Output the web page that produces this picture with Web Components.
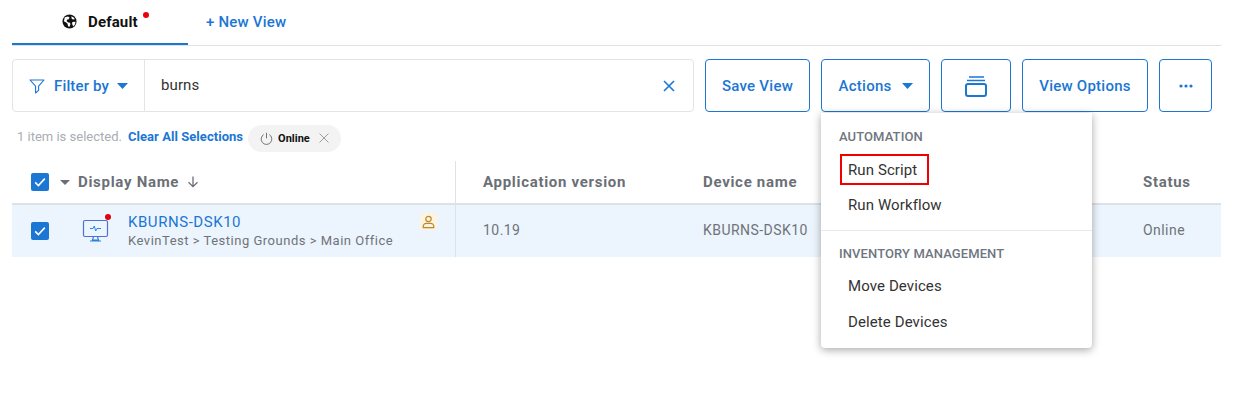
<!DOCTYPE html>
<html><head><meta charset="utf-8"><style>
html,body{margin:0;padding:0;background:#fff}
body{font-family:Roboto,"Liberation Sans",sans-serif;width:1233px;height:413px;overflow:hidden}
</style></head><body>
<app-page></app-page>
<script>
const CHECK=`<svg width="18" height="18" viewBox="0 0 18 18"><rect width="18" height="18" rx="2" fill="#1b76d4"/><path d="M4.2 9.4l3.2 3.2 6.4-7" fill="none" stroke="#fff" stroke-width="1.6"/></svg>`;
const CARET=`<svg width="11" height="6" viewBox="0 0 11 6"><path d="M0 0h11L5.5 6z" fill="#1b76d4"/></svg>`;
function def(name,css,html){customElements.define(name,class extends HTMLElement{constructor(){super();this.attachShadow({mode:'open'}).innerHTML=`<style>${css}</style>${html}`}})}

def('view-tabs',`:host{display:flex;height:45px;border-bottom:1px solid #dfe1e4;box-sizing:content-box;font-size:15px;font-weight:500;letter-spacing:.2px}
.tab{box-sizing:border-box;width:176px;height:45px;border-bottom:2px solid #1b76d4;display:flex;align-items:center;color:#111;padding:0 0 0 50px;position:relative}
.tab svg{margin-right:11px}
.tab span{font-weight:700;letter-spacing:.15px}
.dot{width:6px;height:6px;border-radius:50%;background:#e8000f;position:absolute;left:131px;top:12px}
.new{margin-left:18px;color:#1b76d4;display:flex;align-items:center;padding-bottom:1px}`,
`<div class="tab"><svg width="15" height="15" viewBox="0 0 16 16"><circle cx="8" cy="8" r="7.5" fill="#111"/><path d="M3 3.5l3.5-.8 1.6 1.4-1 1.6-1.8.3-.3 1.6 1.7 1.5 1.9.2.4 1.7-1 2.6-1.4-.4-.8-3-2.2-1.6-1.6-.8zM10 2.3l2.8 1.7.8 1.6-2 .3-1.4-1zM11 8.5l3.4-.3-.6 3-1.8 2-1.2-2.5z" fill="#fff"/></svg><span>Default</span><i class="dot"></i></div><div class="new">+ New View</div>`);

def('filter-box',`:host{display:flex;width:682px;height:53px;box-sizing:border-box;border:1px solid #e2e4e7;border-radius:4px;align-items:center;font-size:15px}
.f{width:132px;height:100%;box-sizing:border-box;border-right:1px solid #e2e4e7;display:flex;align-items:center;color:#1b76d4;font-weight:500;padding-left:17px;flex:none}
.f svg:first-child{margin-left:-1px}
.f span{margin:0 8px 0 9px;letter-spacing:.15px}
.q{flex:1;padding-left:16px;color:#333;font-size:15px;margin-top:-1px;letter-spacing:.1px}
.x{margin-right:17px;display:flex}`,
`<div class="f"><svg width="16" height="16" viewBox="0 0 16 16"><path d="M1 2h14L9.6 8.2v4.2L6.6 15V8.2z" fill="none" stroke="#1b76d4" stroke-width="1.1" stroke-linejoin="round"/></svg><span>Filter by</span>${CARET}</div><div class="q">burns</div><div class="x"><svg width="14" height="14" viewBox="0 0 14 14"><path d="M2 2l10 10M12 2L2 12" stroke="#1b76d4" stroke-width="1.6"/></svg></div>`);

def('tool-button',`:host{display:flex;align-items:center;justify-content:center;gap:11px;box-sizing:border-box;height:53px;border:1px solid #1b76d4;border-radius:4px;color:#1b76d4;font-size:15px;font-weight:500;letter-spacing:.25px;flex:none;background:#fff}`,`<slot></slot>`);

def('selection-line',`:host{display:flex;align-items:center;height:49px;padding:0 0 0 5px;font-size:13px}
.g{color:#a9adb3;margin-right:6px}
.c{color:#1b76d4;font-weight:700;margin-top:-1px;letter-spacing:.05px}
.chip{margin-left:5px;width:93px;height:27px;border-radius:14px;background:#f3f3f3;display:flex;align-items:center;box-sizing:border-box;padding-left:12px;font-size:11px;font-weight:700;color:#111;margin-top:3px}
.chip span{margin:0 9px 0 5px}`,
`<span class="g">1 item is selected.</span><span class="c">Clear All Selections</span><div class="chip"><svg width="13" height="13" viewBox="0 0 13 13"><path d="M3.7 2.6a5.3 5.3 0 1 0 5.6 0M6.5.8v5.6" fill="none" stroke="#6f7276" stroke-width="1"/></svg><span>Online</span><svg width="10" height="10" viewBox="0 0 10 10"><path d="M.5.5l9 9M9.5.5l-9 9" stroke="#9a9da1" stroke-width="1"/></svg></div>`);

def('device-table',`:host{display:block;width:1209px;font-size:14px}
.r{display:grid;grid-template-columns:443px 1px 220px 440px 105px;align-items:center}
.h{height:42px;border-bottom:2px solid #dee1e5;font-weight:700;color:#6b6f76;letter-spacing:.7px;font-size:15px}
.b{height:52px;background:#ecf5fd;color:#6f7379;letter-spacing:.45px}
.b .c{padding-bottom:2px}
.d{background:#dee1e5;height:100%;align-self:stretch}
.c{padding-left:27px}
.first{display:flex;align-items:center;padding-left:19px}
.b .first{position:relative;height:100%}
.mon{margin:-2px 18px 0 33px;position:relative;width:28px;height:26px;flex:none}
.dot{position:absolute;left:23px;top:-3px;width:6px;height:6px;border-radius:50%;background:#e00010}
.nm{color:#1b76d4;font-size:15px;line-height:18px;letter-spacing:.55px}
.pa{font-size:13px;line-height:17px;letter-spacing:.51px;color:#6f7379;margin-top:1px;white-space:nowrap}
.usr{position:absolute;left:408px;top:8px;width:17px;height:17px;background:#fdf3df;border-radius:2px;display:flex;align-items:center;justify-content:center}`,
`<div class="r h"><div class="first"><span style="display:flex">${CHECK}</span><svg width="10" height="5" viewBox="0 0 10 5" style="margin:0 8px 0 11px"><path d="M0 0h10L5 5z" fill="#6b6f76"/></svg><span>Display Name</span><svg width="12" height="12" viewBox="0 0 12 12" style="margin-left:8px"><path d="M6 .5v10M1.5 6.2L6 10.7l4.5-4.5" fill="none" stroke="#6b6f76" stroke-width="1.3"/></svg></div><div class="d"></div><div class="c">Application version</div><div class="c">Device name</div><div class="c">Status</div></div>
<div class="r b"><div class="first"><span style="display:flex">${CHECK}</span><div class="mon"><svg width="28" height="26" viewBox="0 0 28 26"><rect x="1.5" y="3.5" width="24" height="16" rx="1.5" fill="none" stroke="#4f6fd8" stroke-width="1.2"/><path d="M8 11.5h3l1.3-2.5 1.4 5 1.2-2.5H19" fill="none" stroke="#2a86dc" stroke-width="1"/><path d="M11.5 19.7l-1 3.5h6l-1-3.5M8 24h11" fill="none" stroke="#2a7fd8" stroke-width="1.2"/></svg><i class="dot"></i></div><div><div class="nm">KBURNS-DSK10</div><div class="pa">KevinTest &gt; Testing Grounds &gt; Main Office</div></div><div class="usr"><svg width="13" height="14" viewBox="0 0 13 14"><circle cx="6.5" cy="4" r="2.7" fill="none" stroke="#b9892e" stroke-width="1.2"/><path d="M1.2 12.6v-1.2c0-1.8 1.7-3 3-3h4.6c1.3 0 3 1.2 3 3v1.2z" fill="none" stroke="#b9892e" stroke-width="1.2"/></svg></div></div><div class="d"></div><div class="c">10.19</div><div class="c">KBURNS-DSK10</div><div class="c">Online</div></div>`);

def('actions-menu',`:host{position:absolute;left:821px;top:113px;width:271px;height:235px;background:#fff;border-radius:0 0 4px 4px;box-shadow:0 2px 8px rgba(0,0,0,.35);font-size:15px;color:#333;display:block;box-sizing:border-box;padding-top:16px}
.t{font-size:13px;font-weight:500;color:#6e7680;padding-left:18px;line-height:15px;letter-spacing:.1px}
.i{padding-left:27px;line-height:20px;letter-spacing:.1px}
.hl{display:block;margin:10px 0 0 19px;border:2px solid #f00000;width:89px;height:31px;box-sizing:border-box;padding-left:6px;line-height:28px;letter-spacing:.1px}
hr{border:0;border-top:1px solid #e8e9eb;margin:0}`,
`<div class="t">AUTOMATION</div><div class="hl">Run Script</div><div class="i" style="margin-top:10px">Run Workflow</div><hr style="margin-top:15px"><div class="t" style="margin-top:15px">INVENTORY MANAGEMENT</div><div class="i" style="margin-top:15px">Move Devices</div><div class="i" style="margin-top:16px">Delete Devices</div>`);

def('app-page',`:host{display:block;position:relative;padding:0 12px;width:1233px;height:413px;box-sizing:border-box}
.bar{display:flex;margin-top:13px}`,
`<view-tabs></view-tabs>
<div class="bar"><filter-box></filter-box>
<tool-button style="width:105px;margin-left:11px">Save View</tool-button>
<tool-button style="width:109px;margin-left:11px;padding-left:1px">Actions ${CARET}</tool-button>
<tool-button style="width:70px;margin-left:11px"><svg width="24" height="22" viewBox="0 0 24 22" style="margin-top:2px"><rect x="2" y="8" width="20" height="12" rx="2" fill="none" stroke="#1b76d4" stroke-width="2"/><path d="M5 1h15M3 4.5h18" stroke="#1b76d4" stroke-width="1.3"/></svg></tool-button>
<tool-button style="width:126px;margin-left:11px">View Options</tool-button>
<tool-button style="width:53px;margin-left:11px"><svg width="14" height="4" viewBox="0 0 14 4"><circle cx="2" cy="2" r="1.6" fill="#1b76d4"/><circle cx="7" cy="2" r="1.6" fill="#1b76d4"/><circle cx="12" cy="2" r="1.6" fill="#1b76d4"/></svg></tool-button></div>
<selection-line></selection-line>
<device-table></device-table>
<actions-menu></actions-menu>`);
</script></body></html>
